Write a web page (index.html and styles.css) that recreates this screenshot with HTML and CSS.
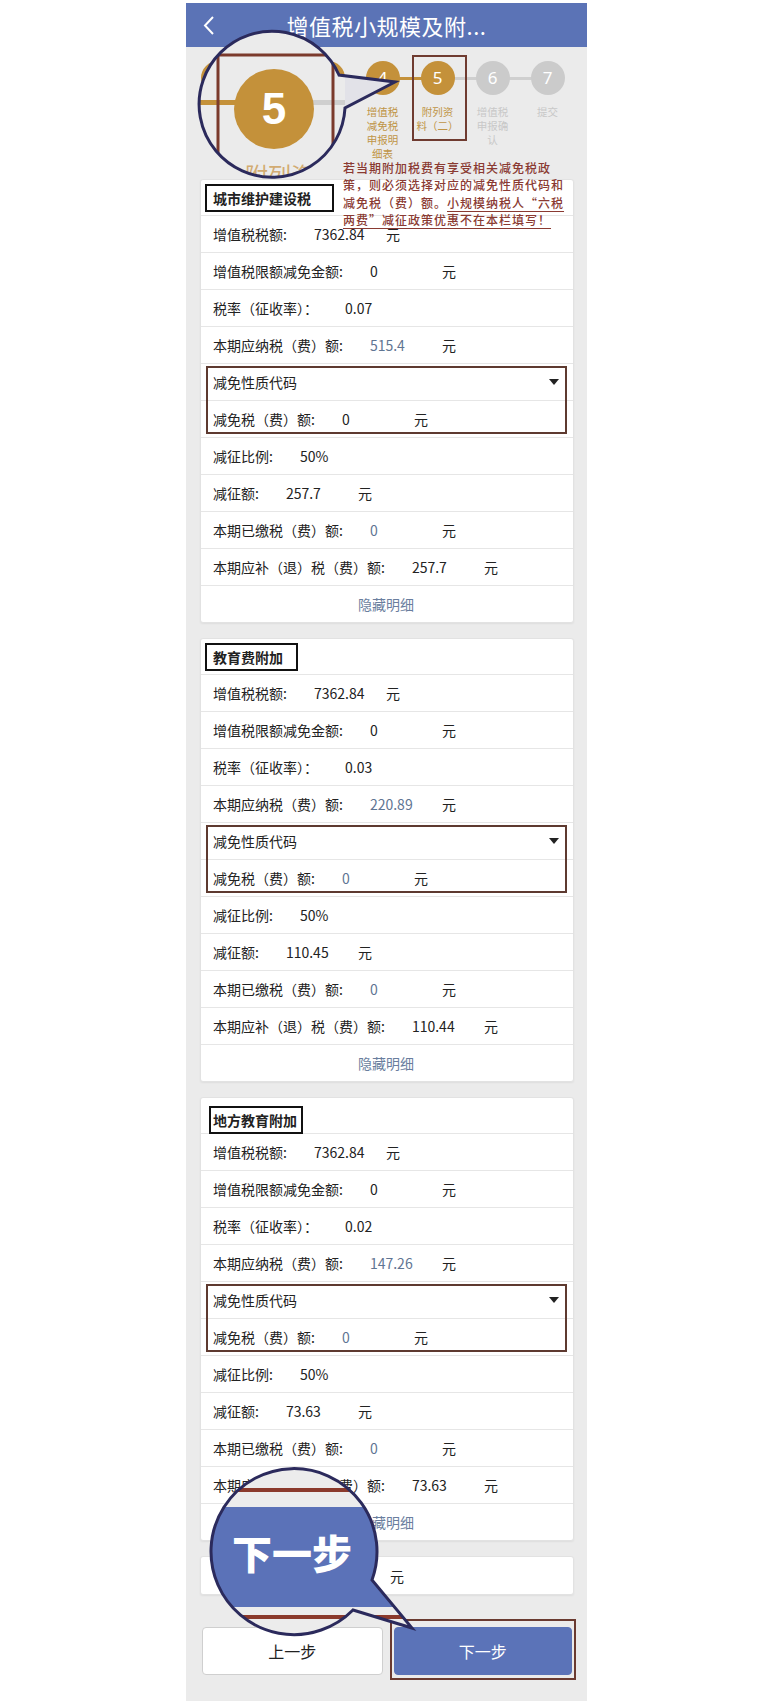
FILE: index.html
```html
<!DOCTYPE html>
<html lang="zh-CN">
  <head>
    <meta charset="utf-8"/>
    <title>增值税小规模及附加税费申报</title>
    <meta name="viewport" content="width=device-width, initial-scale=1.0"/>
    <link rel="stylesheet" href="styles.css">
  </head>
  <body>
    <div id="phone">
      <div class="topbar">
        <span class="back">
          <svg width="12" height="19" viewBox="0 0 12 19"><polyline points="10,1 2,9.5 10,18" fill="none" stroke="#fff" stroke-width="2"/></svg>
        </span>
        <h1>增值税小规模及附...</h1>
        <span></span>
      </div>

      <div class="steps">
        <div class="step"><span class="dot">1</span></div>
        <div class="step"><span class="dot">2</span></div>
        <div class="step"><span class="dot">3</span></div>
        <div class="step"><span class="dot">4</span><span class="name">增值税<br>减免税<br>申报明<br>细表</span></div>
        <div class="step marked"><span class="dot">5</span><span class="name">附列资<br>料（二）</span></div>
        <div class="step todo"><span class="dot">6</span><span class="name">增值税<br>申报确<br>认</span></div>
        <div class="step todo"><span class="dot">7</span><span class="name">提交</span></div>
      </div>

      <div class="cards">
        <div class="card">
          <div class="card-head"><span class="tag tag-wide">城市维护建设税</span></div>
          <div class="row"><span>增值税税额:</span><span class="val">7362.84</span><span>元</span></div>
          <div class="row"><span>增值税限额减免金额:</span><span class="val">0</span><span>元</span></div>
          <div class="row"><span>税率（征收率）：</span><span class="val">0.07</span></div>
          <div class="row"><span>本期应纳税（费）额:</span><span class="val link">515.4</span><span>元</span></div>
          <div class="pick">
            <div class="row select"><span>减免性质代码</span><span class="caret"></span></div>
            <div class="row"><span>减免税（费）额:</span><span class="val">0</span><span>元</span></div>
          </div>
          <div class="row"><span>减征比例:</span><span class="val">50%</span></div>
          <div class="row"><span>减征额:</span><span class="val">257.7</span><span>元</span></div>
          <div class="row"><span>本期已缴税（费）额:</span><span class="val link">0</span><span>元</span></div>
          <div class="row"><span>本期应补（退）税（费）额:</span><span class="val">257.7</span><span>元</span></div>
          <div class="row more">隐藏明细</div>
        </div>

        <div class="card">
          <div class="card-head"><span class="tag">教育费附加</span></div>
          <div class="row"><span>增值税税额:</span><span class="val">7362.84</span><span>元</span></div>
          <div class="row"><span>增值税限额减免金额:</span><span class="val">0</span><span>元</span></div>
          <div class="row"><span>税率（征收率）：</span><span class="val">0.03</span></div>
          <div class="row"><span>本期应纳税（费）额:</span><span class="val link">220.89</span><span>元</span></div>
          <div class="pick">
            <div class="row select"><span>减免性质代码</span><span class="caret"></span></div>
            <div class="row"><span>减免税（费）额:</span><span class="val link">0</span><span>元</span></div>
          </div>
          <div class="row"><span>减征比例:</span><span class="val">50%</span></div>
          <div class="row"><span>减征额:</span><span class="val">110.45</span><span>元</span></div>
          <div class="row"><span>本期已缴税（费）额:</span><span class="val link">0</span><span>元</span></div>
          <div class="row"><span>本期应补（退）税（费）额:</span><span class="val">110.44</span><span>元</span></div>
          <div class="row more">隐藏明细</div>
        </div>

        <div class="card">
          <div class="card-head"><span class="tag tag-tight">地方教育附加</span></div>
          <div class="row"><span>增值税税额:</span><span class="val">7362.84</span><span>元</span></div>
          <div class="row"><span>增值税限额减免金额:</span><span class="val">0</span><span>元</span></div>
          <div class="row"><span>税率（征收率）：</span><span class="val">0.02</span></div>
          <div class="row"><span>本期应纳税（费）额:</span><span class="val link">147.26</span><span>元</span></div>
          <div class="pick">
            <div class="row select"><span>减免性质代码</span><span class="caret"></span></div>
            <div class="row"><span>减免税（费）额:</span><span class="val link">0</span><span>元</span></div>
          </div>
          <div class="row"><span>减征比例:</span><span class="val">50%</span></div>
          <div class="row"><span>减征额:</span><span class="val">73.63</span><span>元</span></div>
          <div class="row"><span>本期已缴税（费）额:</span><span class="val link">0</span><span>元</span></div>
          <div class="row"><span>本期应补（退）税（费）额:</span><span class="val">73.63</span><span>元</span></div>
          <div class="row more">隐藏明细</div>
        </div>

        <div class="card">
          <div class="row first"><span class="val wide"></span><span>元</span></div>
        </div>
      </div>

      <div class="buttons">
        <button class="btn">上一步</button>
        <div class="btn-mark"><button class="btn primary">下一步</button></div>
      </div>

      <!-- annotations drawn over the screenshot -->
      <div class="note">
        若当期附加税费有享受相关减免税政<br>
        策，则必须选择对应的减免性质代码和<br>
        减免税（费）额。<u>小规模纳税人“六税</u><br>
        <u>两费”减征政策优惠不在本栏填写！</u>
      </div>

      <svg class="lens" width="401" height="1701" viewBox="186 0 401 1701">
        <defs>
          <clipPath id="lens-top"><path d="M339 75 A73 73 0 1 0 345 108 L395 82 Z"/></clipPath>
          <clipPath id="lens-bottom"><path d="M372 1580 A83 83 0 1 0 353 1610 L412 1628 Z"/></clipPath>
        </defs>
        <g clip-path="url(#lens-top)">
          <rect x="186" y="30" width="220" height="160" fill="#ebebeb"/>
          <rect x="186" y="100" width="88" height="5" fill="#c4913a"/>
          <rect x="274" y="100" width="130" height="5" fill="#cfcfcf"/>
          <rect x="345" y="72" width="60" height="40" fill="#e2e2e8"/>
          <circle cx="274" cy="109" r="40" fill="#c4913a"/>
          <text class="lens-num" x="274" y="124">5</text>
          <path d="M218 190 V55 H333 V190" fill="none" stroke="#7b3a2c" stroke-width="3"/>
          <text class="lens-label" x="245" y="184">附列资</text>
        </g>
        <path d="M339 75 A73 73 0 1 0 345 108 L395 82 Z" fill="none" stroke="#2b2a5c" stroke-width="3"/>

        <g clip-path="url(#lens-bottom)">
          <rect x="200" y="1460" width="220" height="180" fill="#ececec"/>
          <rect x="200" y="1488" width="220" height="4" fill="#8b3a2c"/>
          <rect x="200" y="1507" width="220" height="100" fill="#5b72b8"/>
          <rect x="200" y="1615" width="220" height="4" fill="#8b3a2c"/>
          <text class="lens-btn" x="232" y="1569">下一步</text>
        </g>
        <path d="M372 1580 A83 83 0 1 0 353 1610 L412 1628 Z" fill="none" stroke="#2b2a5c" stroke-width="3"/>
      </svg>
    </div>
  </body>
</html>
```

FILE: styles.css
```css
* {
  box-sizing: border-box;
  margin: 0;
  padding: 0;
}
body {
  background: #fff;
  font-family: "Noto Sans CJK SC", "Noto Sans", sans-serif;
  color: #222;
}
#phone {
  position: relative;
  width: 401px;
  height: 1701px;
  margin-left: 186px;
  background: #ebebeb;
  overflow: hidden;
}
.topbar {
  display: grid;
  grid-template-columns: 1fr auto 1fr;
  align-items: center;
  height: 47px;
  border-top: 3px solid #fff;
  background: #5b73b6;
}
.back {
  display: flex;
  padding-left: 17px;
}
h1 {
  font-size: 22px;
  font-weight: 400;
  color: #fff;
  letter-spacing: 0.5px;
}

/* steps */
.steps {
  display: flex;
  align-items: flex-start;
  height: 132px;
  padding: 14px 0 0 4px;
}
.step {
  position: relative;
  display: flex;
  flex-direction: column;
  align-items: center;
  width: 55px;
}
.step + .step::before {
  content: "";
  position: absolute;
  top: 16px;
  right: 50%;
  width: 55px;
  height: 3px;
  background: #c4913a;
}
.step.todo::before {
  background: #cfcfcf;
}
.dot {
  position: relative;
  z-index: 1;
  width: 34px;
  height: 34px;
  border-radius: 50%;
  background: #c4913a;
  color: #fff;
  font-family: "Noto Sans", sans-serif;
  font-size: 17px;
  line-height: 34px;
  text-align: center;
}
.todo .dot {
  background: #cbcbcb;
}
.name {
  margin-top: 10px;
  font-size: 10.5px;
  line-height: 14px;
  color: #bf9445;
  text-align: center;
  white-space: nowrap;
}
.todo .name {
  color: #c8c8c8;
}
.step.marked::after {
  content: "";
  position: absolute;
  z-index: 2;
  top: -6px;
  left: 2px;
  right: -2px;
  bottom: -8px;
  border: 2px solid #6f3b30;
}

/* cards */
.cards {
  display: flex;
  flex-direction: column;
  gap: 15px;
  padding: 0 13px 0 14px;
}
.card {
  background: #fff;
  border: 1px solid #e2e2e2;
  border-radius: 3px;
  box-shadow: 0 1px 2px rgba(0, 0, 0, 0.06);
}
.card-head {
  display: flex;
  align-items: center;
  height: 35px;
  padding-left: 4px;
}
.tag {
  height: 28px;
  padding: 0 13px 0 6px;
  border: 2px solid #111;
  font-size: 14px;
  font-weight: 700;
  line-height: 24px;
}
.tag-wide {
  padding-right: 21px;
}
.tag-tight {
  margin-left: 4px;
  margin-top: 8px;
  padding: 0 4px 0 2px;
}
.row {
  display: flex;
  align-items: center;
  height: 37px;
  padding: 0 14px 0 12px;
  border-top: 1px solid #e6e6e6;
  font-size: 14px;
}
.row.first {
  border-top: 0;
}
.val {
  width: 72px;
  margin-left: 27px;
}
.val.wide {
  width: 150px;
}
.val.link {
  color: #5f7593;
}
.select {
  justify-content: space-between;
}
.caret {
  width: 0;
  height: 0;
  border-left: 5px solid transparent;
  border-right: 5px solid transparent;
  border-top: 6px solid #222;
}
.pick {
  position: relative;
}
.pick::after {
  content: "";
  position: absolute;
  top: 3px;
  left: 5px;
  right: 6px;
  bottom: 3px;
  border: 2px solid #5e3a30;
}
.more {
  justify-content: center;
  color: #6a7e9e;
}

/* buttons */
.buttons {
  display: flex;
  gap: 11px;
  padding: 32px 15px 0 16px;
}
.buttons > * {
  flex: 1;
}
.btn {
  width: 100%;
  height: 48px;
  border: 1px solid #cfcfcf;
  border-radius: 4px;
  background: #fff;
  color: #222;
  font-family: "Noto Sans CJK SC", sans-serif;
  font-size: 16px;
}
.btn.primary {
  border-color: #5b73b8;
  background: #5b73b8;
  color: #fff;
}
.btn-mark {
  position: relative;
}
.btn-mark::after {
  content: "";
  position: absolute;
  top: -8px;
  left: -4px;
  right: -4px;
  bottom: -5px;
  border: 2px solid #6a3a30;
}

/* annotations */
.note {
  position: absolute;
  z-index: 5;
  left: 157px;
  top: 159px;
  font-size: 12px;
  font-weight: 500;
  letter-spacing: 1px;
  line-height: 17.3px;
  color: #8a3a32;
  white-space: nowrap;
}
.note u {
  text-underline-offset: 3px;
}
.lens {
  position: absolute;
  z-index: 10;
  top: 0;
  left: 0;
  pointer-events: none;
}
.lens-num {
  font-family: "Liberation Sans", sans-serif;
  font-size: 44px;
  font-weight: 700;
  fill: #fff;
  text-anchor: middle;
}
.lens-label {
  font-family: "Noto Sans CJK SC", sans-serif;
  font-size: 23px;
  fill: #d2ab72;
}
.lens-btn {
  font-family: "Noto Sans CJK SC", sans-serif;
  font-size: 40px;
  font-weight: 900;
  fill: #fff;
}
```
